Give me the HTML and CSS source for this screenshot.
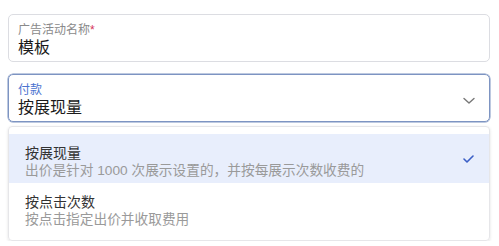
FILE: index.html
```html
<!DOCTYPE html>
<html lang="zh-CN">
<head>
<meta charset="UTF-8">
<meta name="viewport" content="width=device-width, initial-scale=1.0">
<title>广告活动</title>
<link rel="stylesheet" href="styles.css">
</head>
<body>

<div class="form">
  <div class="field">
    <div class="field-label">广告活动名称<span class="required">*</span></div>
    <div class="field-value">模板</div>
  </div>

  <div class="field field-select is-open">
    <div class="field-text">
      <div class="field-label">付款</div>
      <div class="field-value">按展现量</div>
    </div>
    <svg class="chevron" width="12" height="8" viewBox="0 0 12 8">
      <path d="M1 1.5 L6 6 L11 1.5" fill="none" stroke="#777" stroke-width="1.4" stroke-linecap="round" stroke-linejoin="round"/>
    </svg>
  </div>

  <div class="menu">
    <div class="menu-item is-selected">
      <div class="menu-text">
        <div class="menu-title">按展现量</div>
        <div class="menu-desc">出价是针对 1000 次展示设置的，并按每展示次数收费的</div>
      </div>
      <svg class="check" width="11" height="8" viewBox="0 0 11 8">
        <path d="M1 4 L4 7 L10 1" fill="none" stroke="#3b5fc6" stroke-width="1.6" stroke-linecap="round" stroke-linejoin="round"/>
      </svg>
    </div>
    <div class="menu-item">
      <div class="menu-text">
        <div class="menu-title">按点击次数</div>
        <div class="menu-desc">按点击指定出价并收取费用</div>
      </div>
    </div>
  </div>
</div>

</body>
</html>
```

FILE: styles.css
```css
body {
  margin: 0;
  font-family: "Liberation Sans", "Noto Sans CJK SC", sans-serif;
  background: #fff;
}
.form {
  padding: 14px 9px 0 8px;
}
.field {
  border: 1px solid #dcdde2;
  border-radius: 5px;
  padding: 7px 9px 3px 9px;
}
.field-label {
  font-size: 12px;
  line-height: 16px;
  color: #8a8a8a;
}
.required {
  color: #d6335a;
}
.field-value {
  font-size: 16px;
  line-height: 20px;
  color: #1a1a1a;
}
.field-select {
  margin-top: 12px;
  display: flex;
  align-items: center;
  border: 1px solid #7d94c2;
  box-shadow: 0 0 0 0.5px #7d94c2;
}
.field-select .field-label {
  color: #4a72cf;
}
.field-text {
  flex: 1;
}
.chevron {
  margin-right: 5px;
  margin-top: 2px;
}
.menu {
  margin-top: 4px;
  border: 1px solid #e6e6e9;
  border-radius: 4px;
  box-shadow: 0 1px 3px rgba(0, 0, 0, 0.12);
  padding: 7px 0 8px 0;
}
.menu-item {
  display: flex;
  align-items: center;
  padding: 10px 15px 3px 16px;
}
.menu-item.is-selected {
  background: #e8eefc;
}
.menu-text {
  flex: 1;
}
.menu-title {
  font-size: 14px;
  line-height: 18px;
  color: #333;
}
.menu-desc {
  font-size: 13.7px;
  line-height: 18px;
  color: #9a9a9a;
}
.check {
  margin-bottom: 7px;
}
```
